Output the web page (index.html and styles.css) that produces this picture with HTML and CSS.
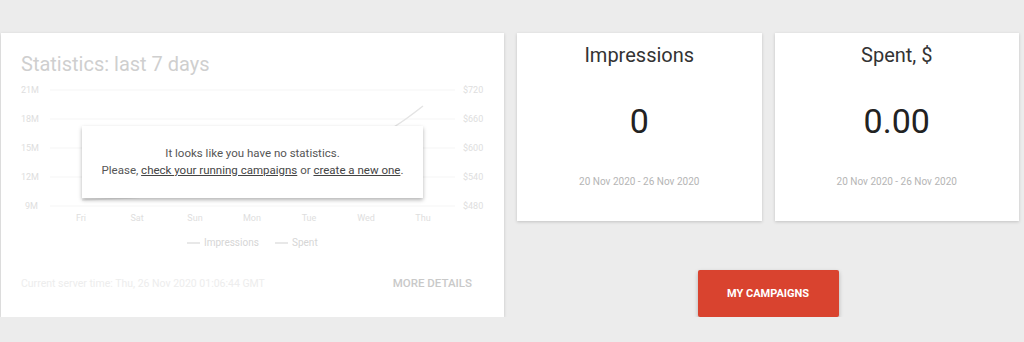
FILE: index.html
```html
<!DOCTYPE html>
<html lang="en">
<head>
  <meta charset="UTF-8">
  <meta name="viewport" content="width=device-width, initial-scale=1.0">
  <title>Dashboard</title>
  <link rel="stylesheet" href="styles.css">
</head>
<body>
  <div class="dashboard">
    <div class="card stats-card">
      <h2 class="stats-title">Statistics: last 7 days</h2>
      <div class="chart">
        <svg class="chart-svg" width="464" height="170" viewBox="21 82 464 170">
          <g class="grid">
            <line x1="50" y1="90" x2="455" y2="90"/>
            <line x1="50" y1="119" x2="455" y2="119"/>
            <line x1="50" y1="148" x2="455" y2="148"/>
            <line x1="50" y1="177" x2="455" y2="177"/>
            <line x1="50" y1="206" x2="455" y2="206"/>
          </g>
          <g class="axis">
            <text x="21" y="93">21M</text>
            <text x="21" y="122">18M</text>
            <text x="21" y="151">15M</text>
            <text x="21" y="180">12M</text>
            <text x="25" y="209">9M</text>
            <text x="463" y="93">$720</text>
            <text x="463" y="122">$660</text>
            <text x="463" y="151">$600</text>
            <text x="463" y="180">$540</text>
            <text x="463" y="209">$480</text>
          </g>
          <g class="axis days">
            <text x="81" y="221">Fri</text>
            <text x="137" y="221">Sat</text>
            <text x="195" y="221">Sun</text>
            <text x="252" y="221">Mon</text>
            <text x="309" y="221">Tue</text>
            <text x="366" y="221">Wed</text>
            <text x="423" y="221">Thu</text>
          </g>
          <path class="series" d="M82,195 C150,186 200,172 280,160 S380,140 423,106"/>
          <path class="series thin" d="M82,200 C160,198 240,190 300,180 S390,155 423,140"/>
          <g class="legend">
            <line x1="187" y1="243" x2="200" y2="243"/>
            <text x="204" y="246">Impressions</text>
            <line x1="275" y1="243" x2="288" y2="243"/>
            <text x="292" y="246">Spent</text>
          </g>
        </svg>
        <div class="empty-note">
          <p>It looks like you have no statistics.</p>
          <p>Please, <a href="#">check your running campaigns</a> or <a href="#">create a new one</a>.</p>
        </div>
      </div>
      <div class="stats-footer">
        <span class="server-time">Current server time: Thu, 26 Nov 2020 01:06:44 GMT</span>
        <span class="more-details">MORE DETAILS</span>
      </div>
    </div>

    <div class="side">
      <div class="tiles">
        <div class="card tile">
          <div class="tile-title">Impressions</div>
          <div class="tile-value">0</div>
          <div class="tile-date">20 Nov 2020 - 26 Nov 2020</div>
        </div>
        <div class="card tile">
          <div class="tile-title">Spent, $</div>
          <div class="tile-value">0.00</div>
          <div class="tile-date">20 Nov 2020 - 26 Nov 2020</div>
        </div>
      </div>
      <button class="campaigns-btn">MY CAMPAIGNS</button>
    </div>
  </div>
</body>
</html>
```

FILE: styles.css
```css
body {
  margin: 0;
  background-color: #ececec;
  font-family: Roboto, "Liberation Sans", Arial, sans-serif;
}
.dashboard {
  display: flex;
  gap: 13px;
  padding: 33px 5px 0 1px;
}
.card {
  background-color: #fff;
  box-shadow: 0 1px 3px rgba(0, 0, 0, 0.18);
  box-sizing: border-box;
}
.stats-card {
  width: 503px;
  height: 284px;
  padding: 19px 20px 0 20px;
}
.stats-title {
  margin: 0;
  font-size: 20px;
  line-height: 24px;
  font-weight: 400;
  color: #cfcfcf;
}
.chart {
  position: relative;
  margin-top: 6px;
  height: 170px;
}
.chart-svg {
  display: block;
}
.grid line {
  stroke: #f5f5f5;
  stroke-width: 1;
}
.axis text {
  font-size: 9px;
  fill: #dedede;
}
.days text {
  text-anchor: middle;
}
.series {
  fill: none;
  stroke: #e4e4e4;
  stroke-width: 1.5;
}
.series.thin {
  stroke: #f0f0f0;
}
.legend line {
  stroke: #e8e8e8;
  stroke-width: 2;
}
.legend text {
  font-size: 10px;
  fill: #d6d6d6;
}
.empty-note {
  position: absolute;
  left: 61px;
  top: 44px;
  width: 341px;
  height: 72px;
  box-sizing: border-box;
  padding-top: 19px;
  background-color: #fff;
  box-shadow: 0 2px 4px rgba(0, 0, 0, 0.3);
  text-align: center;
  font-size: 11.5px;
  line-height: 17px;
  color: #555;
}
.empty-note p {
  margin: 0;
}
.empty-note a {
  color: #444;
}
.stats-footer {
  display: flex;
  justify-content: space-between;
  align-items: center;
  height: 20px;
  margin-top: 21px;
  padding-right: 12px;
}
.server-time {
  font-size: 10.5px;
  color: #ededed;
}
.more-details {
  font-size: 11.5px;
  font-weight: 500;
  color: #c9c9c9;
}
.side {
  width: 503px;
  display: flex;
  flex-direction: column;
  align-items: center;
}
.tiles {
  display: grid;
  grid-template-columns: 1fr 1fr;
  gap: 13px;
  width: 100%;
}
.tile {
  height: 188px;
  padding-top: 10px;
  text-align: center;
}
.tile-title {
  font-size: 20px;
  line-height: 24px;
  color: #333;
}
.tile-value {
  margin-top: 34px;
  font-size: 34px;
  line-height: 40px;
  color: #222;
}
.tile-date {
  margin-top: 34px;
  font-size: 10px;
  line-height: 14px;
  color: #b5b5b5;
}
.campaigns-btn {
  margin-top: 49px;
  width: 141px;
  height: 47px;
  border: none;
  border-radius: 2px;
  background-color: #d9432f;
  color: #fff;
  font-family: Roboto, "Liberation Sans", Arial, sans-serif;
  font-size: 11px;
  font-weight: 700;
  box-shadow: 0 2px 4px rgba(0, 0, 0, 0.25);
  cursor: pointer;
}
```
